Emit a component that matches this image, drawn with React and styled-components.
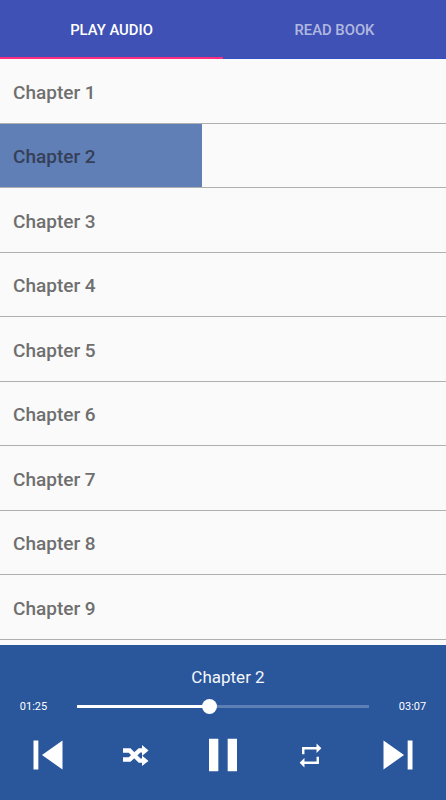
import React from 'react';
import styled, { createGlobalStyle } from 'styled-components';

const GlobalStyle = createGlobalStyle`
  html, body { margin: 0; padding: 0; background: #fafafa; }
  body { font-family: Roboto, "Liberation Sans", sans-serif; }
`;

const Screen = styled.div`
  width: 446px;
  height: 800px;
  display: flex;
  flex-direction: column;
  overflow: hidden;
  background: #fafafa;
`;

const TabBar = styled.div`
  height: 59px;
  flex: none;
  display: flex;
  background: #3f51b5;
`;

const Tab = styled.div`
  flex: 1;
  display: flex;
  align-items: center;
  justify-content: center;
  box-sizing: border-box;
  height: 59px;
  padding-top: ${props => (props.$active ? '3px' : '2px')};
  font-size: 14.8px;
  font-weight: 500;
  color: ${props => (props.$active ? '#ffffff' : 'rgba(255, 255, 255, 0.6)')};
  border-bottom: ${props => (props.$active ? '2px solid #ff2d7e' : '1px solid #2f4fc4')};
`;

const ChapterList = styled.div`
  flex: 1;
  min-height: 0;
`;

const ChapterRow = styled.div`
  height: 64.5px;
  box-sizing: border-box;
  border-bottom: 1px solid #b0b0b0;
`;

const ChapterLabel = styled.div`
  height: 100%;
  width: ${props => (props.$playing ? '202px' : 'auto')};
  display: flex;
  align-items: center;
  padding: 3px 0 0 13px;
  box-sizing: border-box;
  font-size: 19px;
  font-weight: 500;
  color: ${props => (props.$playing ? '#353f58' : '#6f6f6f')};
  background: ${props => (props.$playing ? '#607fb6' : 'transparent')};
`;

const Player = styled.div`
  height: 155px;
  flex: none;
  background: #2a569b;
  display: flex;
  flex-direction: column;
  align-items: center;
`;

const NowPlaying = styled.div`
  margin-top: 23px;
  margin-left: 10px;
  font-size: 17px;
  line-height: 19px;
  color: #f4f6fa;
`;

const SeekRow = styled.div`
  width: 100%;
  height: 20px;
  margin-top: 9px;
  display: grid;
  grid-template-columns: 77px 292px 77px;
  align-items: center;
`;

const TimeLabel = styled.div`
  font-size: 11px;
  color: #ffffff;
  text-align: center;
  transform: translateX(${props => (props.$end ? '5px' : '-5px')});
`;

const Track = styled.div`
  position: relative;
  height: 3px;
  background: #5d7fb5;
`;

const TrackFill = styled.div`
  height: 100%;
  background: #ffffff;
`;

const Thumb = styled.div`
  position: absolute;
  top: -6px;
  width: 15px;
  height: 15px;
  margin-left: -7.5px;
  border-radius: 50%;
  background: #ffffff;
`;

const Controls = styled.div`
  margin-top: 10px;
  width: 100%;
  box-sizing: border-box;
  padding: 0 19px;
  display: flex;
  align-items: center;
  justify-content: space-between;
`;

const IconSlot = styled.div`
  width: 58px;
  height: 58px;
  display: flex;
  align-items: center;
  justify-content: center;
`;

const Icon = styled.svg`
  width: ${props => props.$w}px;
  height: ${props => props.$h}px;
  fill: #ffffff;
  display: block;
`;

const CONTROLS = [
  { name: 'previous', w: 58, h: 58, box: '0 0 24 24', d: 'M6 6h2v12H6zm3.5 6l8.5 6V6z' },
  {
    name: 'shuffle',
    w: 26,
    h: 21,
    box: '0 0 26 21',
    d: 'M0 3.3H7.5L17.5 13.5H19.5V17.7H15.7L5.7 7.7H0ZM0 12.3H5.7L15.7 3.3H19.5V7.5H17.5L7.5 16.7H0ZM19 0L25.5 5.4L19 11ZM19 10.5L25.5 15.9L19 21Z',
  },
  { name: 'pause', w: 56, h: 56, box: '0 0 24 24', d: 'M6 19h4V5H6v14zm8-14v14h4V5h-4z' },
  { name: 'repeat', w: 29, h: 29, box: '0 0 24 24', d: 'M7 7h10v3l4-4-4-4v3H5v6h2V7zm10 10H7v-3l-4 4 4 4v-3h12v-6h-2v4z' },
  { name: 'next', w: 58, h: 58, box: '0 0 24 24', d: 'M6 18l8.5-6L6 6v12zM16 6v12h2V6h-2z' },
];

const chapters = [1, 2, 3, 4, 5, 6, 7, 8, 9];
const progress = (85 / 187) * 100;

export default function App() {
  return (
    <Screen>
      <GlobalStyle />
      <TabBar>
        <Tab $active>PLAY AUDIO</Tab>
        <Tab>READ BOOK</Tab>
      </TabBar>
      <ChapterList>
        {chapters.map(n => (
          <ChapterRow key={n}>
            <ChapterLabel $playing={n === 2}>Chapter {n}</ChapterLabel>
          </ChapterRow>
        ))}
      </ChapterList>
      <Player>
        <NowPlaying>Chapter 2</NowPlaying>
        <SeekRow>
          <TimeLabel>01:25</TimeLabel>
          <Track>
            <TrackFill style={{ width: `${progress}%` }} />
            <Thumb style={{ left: `${progress}%` }} />
          </Track>
          <TimeLabel $end>03:07</TimeLabel>
        </SeekRow>
        <Controls>
          {CONTROLS.map(c => (
            <IconSlot key={c.name}>
              <Icon viewBox={c.box} $w={c.w} $h={c.h}>
                <path d={c.d} />
              </Icon>
            </IconSlot>
          ))}
        </Controls>
      </Player>
    </Screen>
  );
}
